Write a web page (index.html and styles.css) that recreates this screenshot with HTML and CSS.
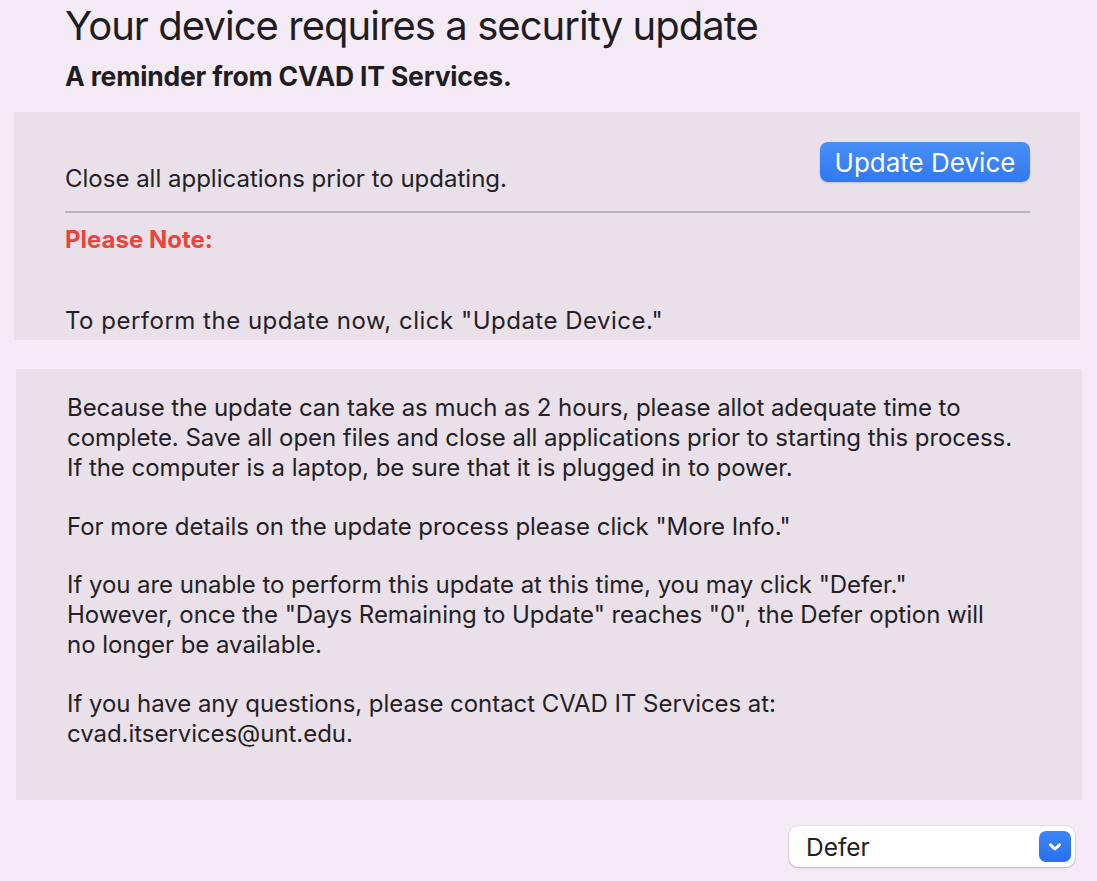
FILE: index.html
```html
<!DOCTYPE html>
<html>
<head>
<meta charset="utf-8">
<link rel="stylesheet" href="styles.css">
</head>
<body>
<div class="page">
  <header class="header">
    <h1 class="title">Your device requires a security update</h1>
    <h2 class="subtitle">A reminder from CVAD IT Services.</h2>
  </header>
  <section class="panel panel-top">
    <div class="action-row">
      <p class="lead">Close all applications prior to updating.</p>
      <button class="btn-primary">Update Device</button>
    </div>
    <hr class="divider">
    <p class="note">Please Note:</p>
    <p class="instr">To perform the update now, click "Update Device."</p>
  </section>
  <section class="panel panel-bottom">
    <p class="para">Because the update can take as much as 2 hours, please allot adequate time to<br>complete. Save all open files and close all applications prior to starting this process.<br>If the computer is a laptop, be sure that it is plugged in to power.</p>
    <p class="para">For more details on the update process please click "More Info."</p>
    <p class="para">If you are unable to perform this update at this time, you may click "Defer."<br>However, once the "Days Remaining to Update" reaches "0", the Defer option will<br>no longer be available.</p>
    <p class="para">If you have any questions, please contact CVAD IT Services at:<br>cvad.itservices@unt.edu.</p>
  </section>
  <footer class="footer">
    <div class="select">
      <span class="select-label">Defer</span>
      <span class="select-btn">
        <svg width="16" height="12" viewBox="0 0 16 12"><path d="M3.5 3.8 L8 8 L12.5 3.8" fill="none" stroke="#fff" stroke-width="3" stroke-linecap="round" stroke-linejoin="round"/></svg>
      </span>
    </div>
  </footer>
</div>
</body>
</html>
```

FILE: styles.css
```css
* { box-sizing: border-box; }
html, body { margin: 0; padding: 0; }
body {
  background: #f5ebf7;
  font-family: Inter, "Noto Sans", "Liberation Sans", sans-serif;
  color: #232125;
  width: 1097px;
  height: 881px;
  overflow: hidden;
}
.page { display: flex; flex-direction: column; }
.header { padding: 0 0 0 65px; }
.title {
  margin: 0;
  padding-top: 2px;
  font-size: 40px;
  font-weight: 400;
  letter-spacing: -0.95px;
  line-height: 48px;
  color: #1f1d21;
}
.subtitle {
  margin: 11px 0 0;
  font-size: 26.5px;
  font-weight: 700;
  line-height: 30px;
  letter-spacing: -0.2px;
  color: #1f1d21;
}
.panel { background: #e9e0e9; }
.panel-top {
  margin: 21px 17px 0 14px;
  padding: 30px 50px 0 51px;
  height: 228px;
}
.action-row { display: flex; justify-content: space-between; align-items: flex-start; }
.lead { margin: 22px 0 0; font-size: 24px; line-height: 30px; }
.btn-primary {
  width: 210px;
  height: 40px;
  border: none;
  border-radius: 8px;
  background: linear-gradient(#4a8ff7, #2f78f0);
  color: #fff;
  font-family: Inter, "Noto Sans", sans-serif;
  font-size: 26px;
  letter-spacing: 0;
  padding: 0;
  box-shadow: 0 1px 2px rgba(0,0,0,0.15);
}
.divider { margin: 17px 0 0; border: none; height: 2px; background: #bab5bb; }
.note { margin: 12px 0 0; font-size: 24px; font-weight: 700; line-height: 30px; color: #e8453c; }
.instr { margin: 51px 0 0; font-size: 24px; line-height: 30px; letter-spacing: 0.5px; }
.panel-bottom {
  margin: 29px 15px 0 16px;
  padding: 24px 30px 0 51px;
  height: 431px;
}
.para { margin: 0 0 28.5px; font-size: 24px; line-height: 30px; white-space: nowrap; letter-spacing: -0.05px; }
.footer { display: flex; justify-content: flex-end; padding: 26px 22px 0 0; }
.select {
  width: 286px;
  height: 41px;
  background: #fff;
  border-radius: 9px;
  box-shadow: 0 0 0 1px rgba(0,0,0,0.06), 0 1px 2px rgba(0,0,0,0.2);
  display: flex;
  align-items: center;
  justify-content: space-between;
  padding: 0 4px 0 17px;
}
.select-label { font-size: 24.5px; color: #222024; }
.select-btn {
  width: 32px; height: 31px;
  border-radius: 7px;
  background: linear-gradient(#3d86f6, #2a6ff0);
  display: flex; align-items: center; justify-content: center;
}
```
